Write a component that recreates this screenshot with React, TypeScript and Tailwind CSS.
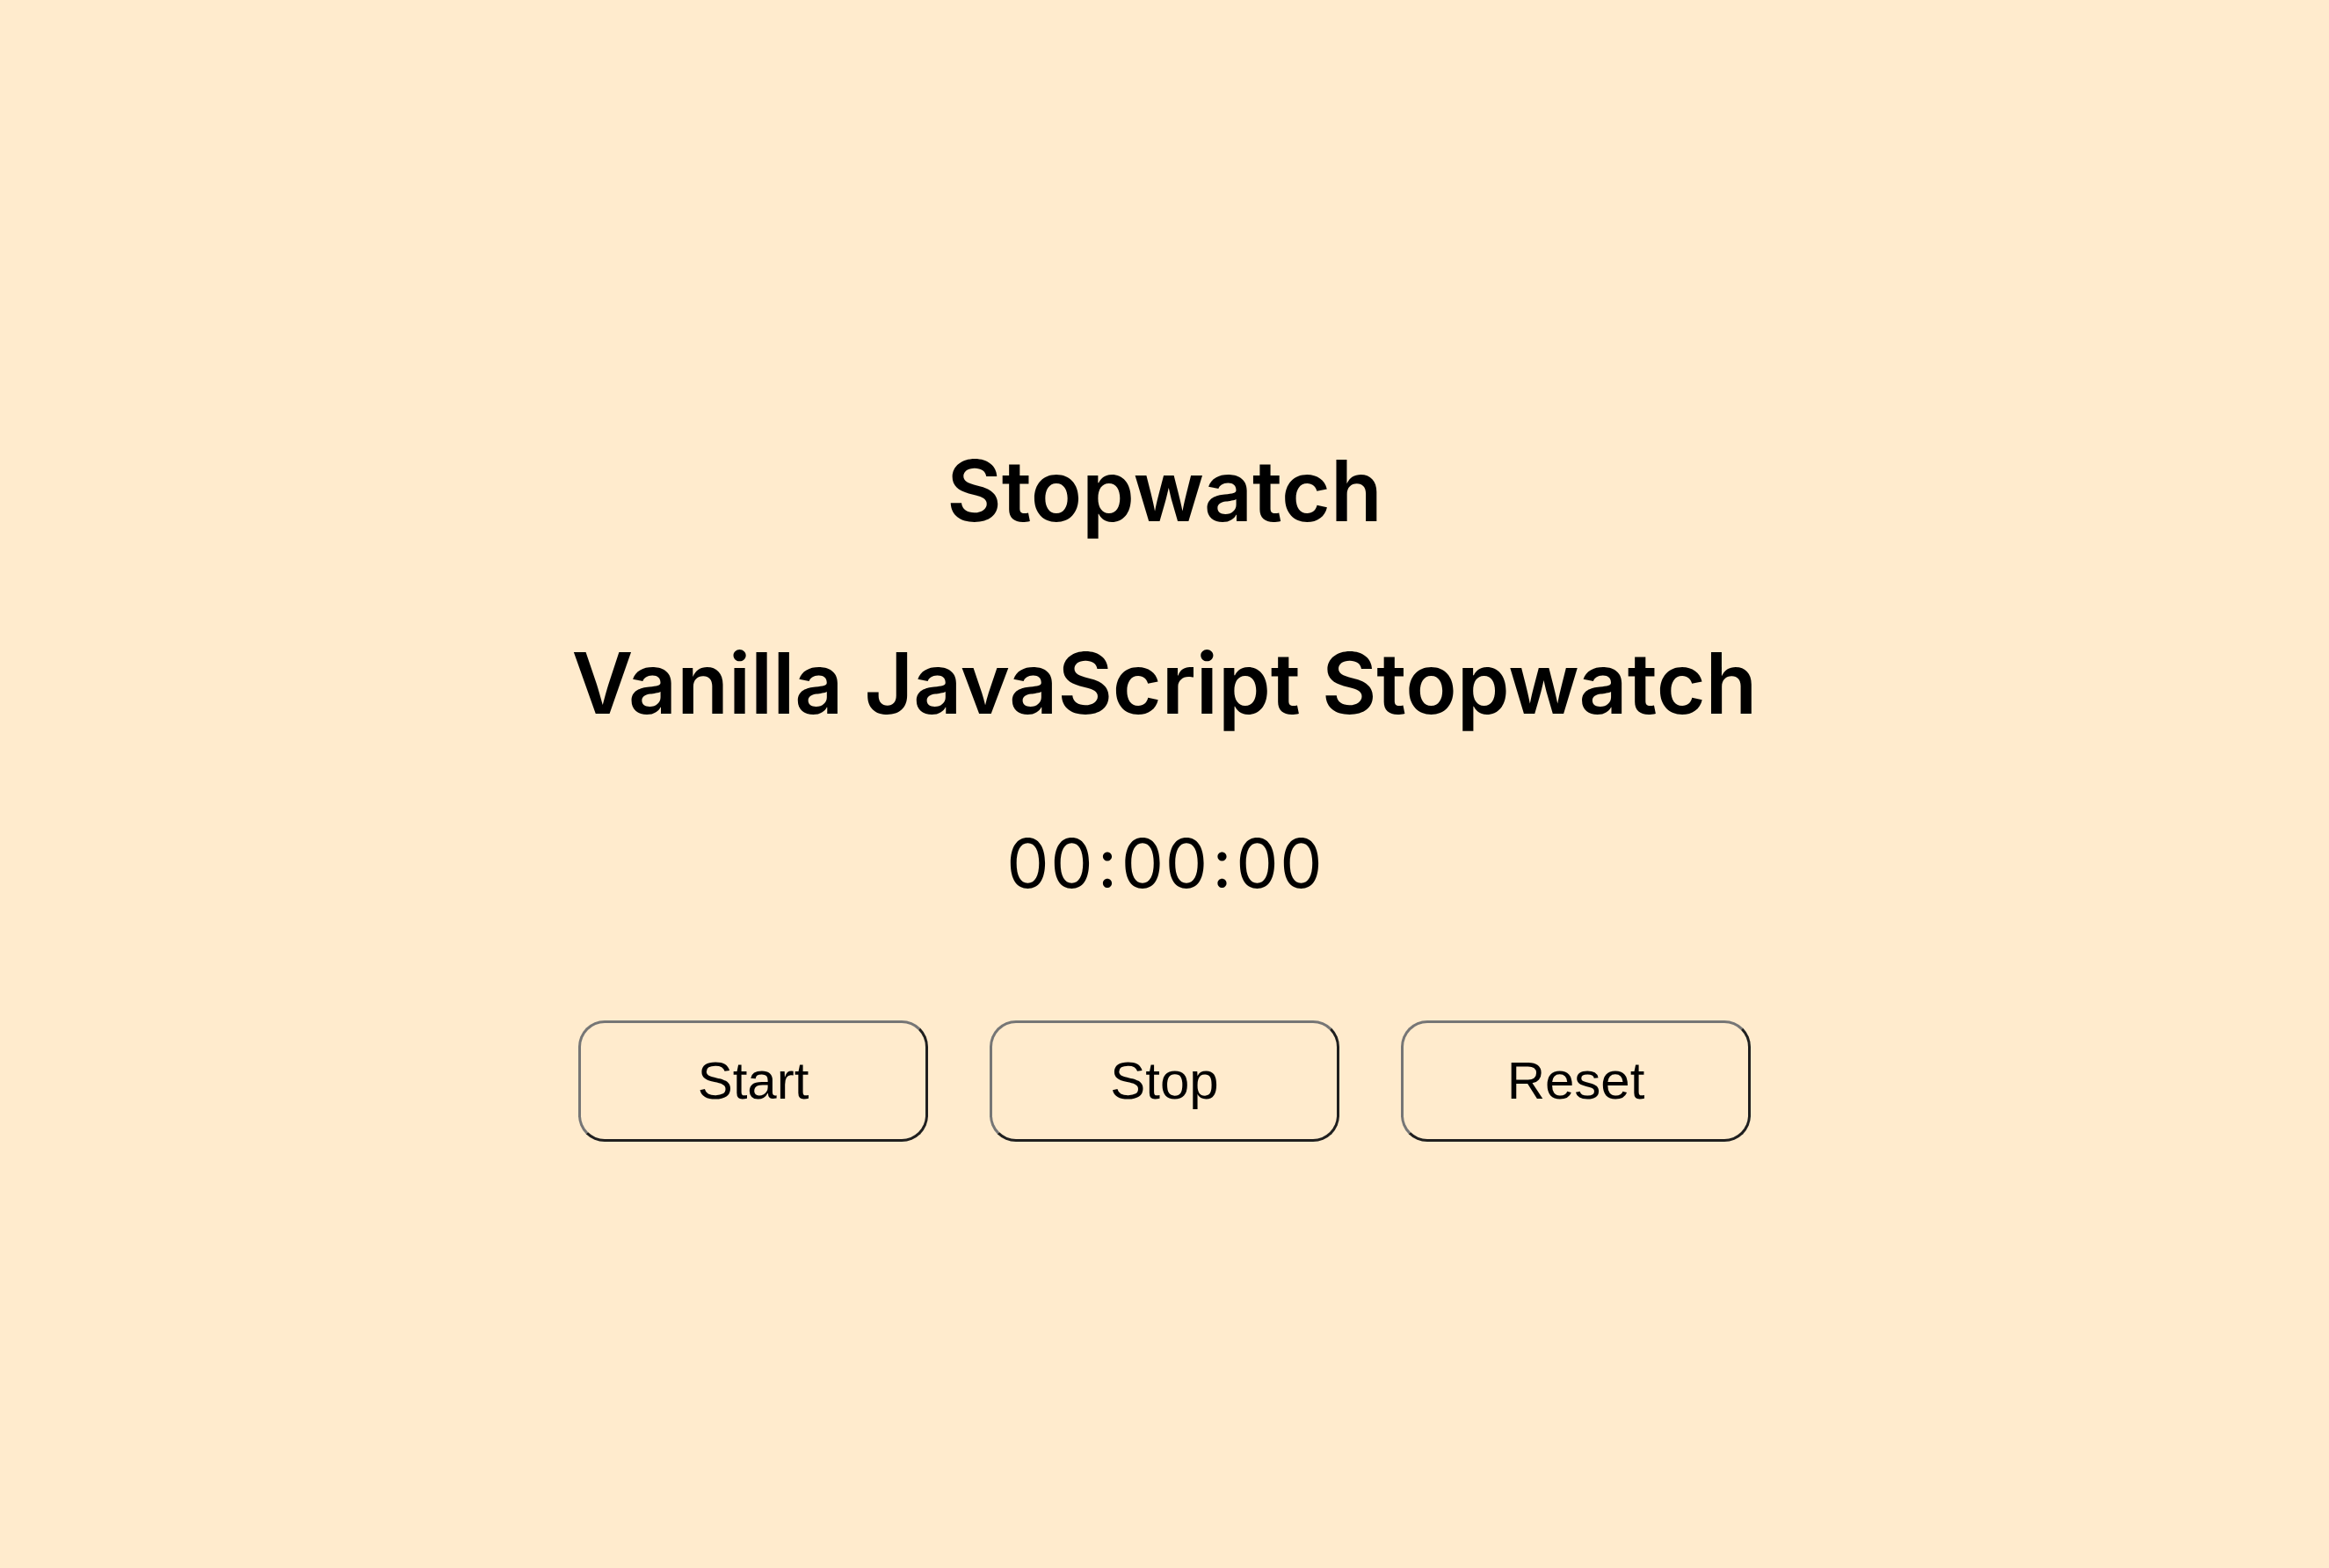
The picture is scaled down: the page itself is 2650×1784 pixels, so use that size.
import React from "react";

export default function App() {
  return (
    <div className="min-h-screen w-full bg-[#ffebcd] flex flex-col items-center text-black" style={{ fontFamily: "Inter, 'Noto Sans', sans-serif" }}>
      <h1 className="mt-[510px] text-[96px] leading-none font-semibold">Stopwatch</h1>
      <h2 className="mt-[123px] text-[96px] leading-none font-semibold">Vanilla JavaScript Stopwatch</h2>
      <div className="mt-[119px] text-[77px] leading-none font-normal [font-feature-settings:'tnum'_1,'calt'_0]">
        <span>00</span>
        <span className="mx-[5px]">:</span>
        <span>00</span>
        <span className="mx-[5px]">:</span>
        <span>00</span>
      </div>
      <div className="mt-[140px] flex gap-[70px]">
        {["Start", "Stop", "Reset"].map((t) => (
          <button
            key={t}
            className="w-[398px] h-[138px] rounded-[30px] border-[3px] border-t-[#767676] border-l-[#767676] border-r-[#1f1f1f] border-b-[#1f1f1f] bg-transparent flex items-center justify-center text-[60px] leading-none text-black"
            style={{ fontFamily: "'Liberation Sans', Arial, sans-serif" }}
          >
            {t}
          </button>
        ))}
      </div>
    </div>
  );
}
